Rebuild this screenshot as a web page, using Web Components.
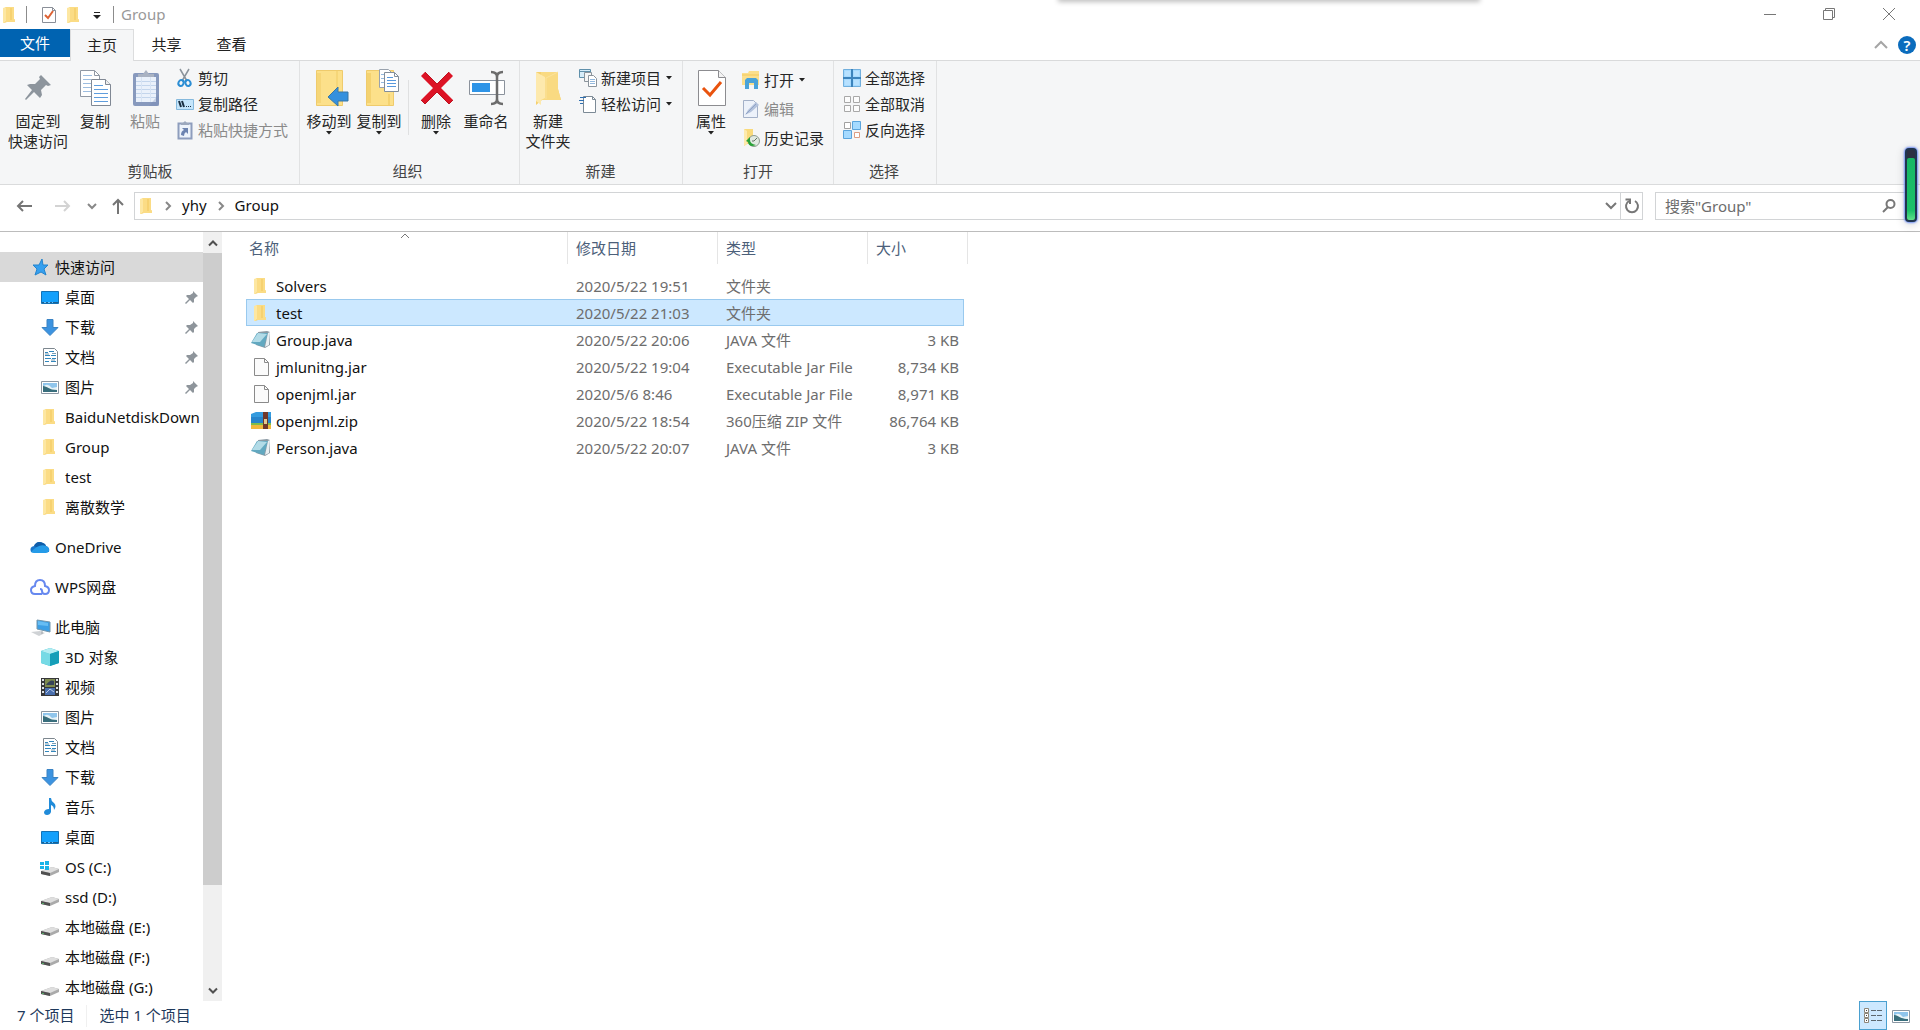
<!DOCTYPE html>
<html lang="zh-CN">
<head>
<meta charset="utf-8">
<title>Group</title>
<style>
  html, body { margin: 0; height: 100%; }
  body {
    overflow: hidden;
    background: #fff;
    color: #1a1a1a;
    font: 15px/20px "Noto Sans", "Noto Sans CJK SC", sans-serif;
  }
</style>
</head>
<body>
<explorer-window></explorer-window>

<script>
const ICONS = {
  folder: [14, 18, `<g transform="translate(-1 0)"><path d="M3 1h9v12l1 1v2H5l-3 1z" fill="#f6cf68"/><path d="M4 1h8v12l1 1v2H4z" fill="#fbdc85"/><path d="M1 2l3-1v14l-2 2H1z" fill="#fde7a2"/><path d="M9 2v12" stroke="#f1c75c"/></g>`],
  check: [16, 18, `<path d="M1.5 1.5h10l3 3v12h-13z" fill="#fff" stroke="#8a8f98"/><path d="M11.5 1.5v3h3" fill="none" stroke="#8a8f98"/><path d="M4 9l3 3 5-7" fill="none" stroke="#dd6234" stroke-width="2"/>`],
  qatMenu: [8, 8, `<path d="M1 .5h6" stroke="#222"/><path d="M0 3h8L4 7z" fill="#222"/>`],
  minimize: [14, 14, `<path d="M1 7.5h12" stroke="#777"/>`],
  restore: [14, 14, `<path d="M1.500 3.500h9v9h-9zM3.500 3V1.500h9v9H11" fill="none" stroke="#777"/>`],
  close: [14, 14, `<path d="M1 1l12 12M13 1L1 13" stroke="#777"/>`],
  chevronUp: [14, 10, `<path d="M1 8l6-6 6 6" fill="none" stroke="#a5a5a5" stroke-width="2"/>`],
  sort: [10, 6, `<path d="M1 5l4-4 4 4" fill="none" stroke="#777"/>`],
  caret: [6, 4, `<path d="M0 0h6L3 3.500z" fill="#222"/>`],
  back: [16, 12, `<path d="M16 6H2M7 1L2 6l5 5" fill="none" stroke="#757575" stroke-width="2"/>`],
  forward: [16, 12, `<path d="M0 6h14M9 1l5 5-5 5" fill="none" stroke="#d3d3d3" stroke-width="2"/>`],
  chevronDown: [10, 8, `<path d="M1 2l4 4 4-4" fill="none" stroke="#888" stroke-width="2"/>`],
  addressDown: [12, 8, `<path d="M1 1l5 5 5-5" fill="none" stroke="#777" stroke-width="2"/>`],
  chevronRight: [8, 10, `<path d="M2 1l4 4-4 4" fill="none" stroke="#888" stroke-width="2"/>`],
  up: [14, 16, `<path d="M7 16V2M2 7l5-5 5 5" fill="none" stroke="#757575" stroke-width="2"/>`],
  refresh: [16, 16, `<path d="M11 3a6 6 0 1 1-6 0" fill="none" stroke="#777" stroke-width="2"/><path d="M1.500 1.500H6V6" fill="none" stroke="#777" stroke-width="2"/>`],
  search: [14, 14, `<circle cx="8.500" cy="5" r="4" fill="none" stroke="#777" stroke-width="2"/><path d="M6 8l-5 5" stroke="#777" stroke-width="2"/>`],
  scrollUp: [10, 8, `<path d="M1 6.500l4-4 4 4" fill="none" stroke="#505050" stroke-width="2"/>`],
  scrollDown: [10, 8, `<path d="M1 1.500l4 4 4-4" fill="none" stroke="#505050" stroke-width="2"/>`],

  bigPin: [40, 36, `<path d="M23 5l10 10-3 1-2-1-5 5 1 5-2 3-6-6-8 8-1-1 7-9-5-5 3-1h5l5-5-1-2z" fill="#8d959d"/>`],
  bigCopy: [40, 36, `<path d="M5.500.5h14l5 5v21h-19z" fill="#fff" stroke="#9098a4"/><path d="M19.500.5v5h5" fill="none" stroke="#9098a4"/><path d="M8 5.500h9M8 9.500h8M8 13.500h8M8 17.500h8M8 21.500h8" stroke="#9dbde0"/><path d="M16.500 9.500h14l5 5v21h-19z" fill="#fff" stroke="#808894"/><path d="M30.500 9.500v5h5" fill="#eee" stroke="#808894"/><path d="M19 15.500h9M19 19.500h14M19 23.500h14M19 27.500h14M19 31.500h14" stroke="#5f9ddd"/>`],
  bigPaste: [40, 36, `<rect x="8" y="3" width="26" height="33" rx="2" fill="#8799bd"/><rect x="11" y="7" width="20" height="25" fill="#eaf1fb"/><path d="M11 11.500h20M11 15.500h20M11 19.500h20M11 23.500h20M11 27.500h20" stroke="#c3d5ec"/><path d="M16.500 7v25M25.500 7v25" stroke="#d8e4f4"/><path d="M13 7V4h5l3-4 3 4h5v3z" fill="#a9b2c2"/><path d="M24 36l10-12v12z" fill="#7589b4" opacity=".3"/>`],
  bigMove: [40, 36, `<path d="M7.500.5h26v35h-26z" fill="#fce08a" stroke="#efcb6c"/><path d="M8 3h4v30H8zM27 1h2v34h-2z" fill="#f6d678"/><path d="M19 27l10-10v5h10v9H29v5z" fill="#3490de" stroke="#3877a5"/>`],
  bigCopyTo: [40, 36, `<path d="M7.500.5h27v35h-27z" fill="#fce08a" stroke="#efcb6c"/><path d="M8 3h4v30H8zM29 24h2v11h-2z" fill="#f4d270"/><path d="M20.500-.5h9l4 4v14h-13z" fill="#fff" stroke="#99a2ad"/><path d="M22 4.500h3M22 8.500h3M22 12.500h3" stroke="#96badf"/><path d="M25.500 2.500h10l4 4v15h-14z" fill="#fff" stroke="#828e9b"/><path d="M35.500 2.500v4h4" fill="none" stroke="#828e9b"/><path d="M28 7.500h6M28 10.500h9M28 13.500h9M28 16.500h9" stroke="#5798dd"/>`],
  bigDelete: [40, 36, `<path d="M9 2l12 12L33 2l4 4-12 12 12 12-4 4-12-12L9 34l-4-4 12-12L5 6z" fill="#dc1325"/><path d="M9 2l12 12L33 2M5 30l4 4 12-12 12 12 4-4" fill="none" stroke="#bc1421"/>`],
  bigRename: [40, 36, `<path d="M3.500 10.500h35v14h-35z" fill="#fff" stroke="#8b929c"/><path d="M6 13h18v9H6z" fill="#2e94e7"/><path d="M25 2q6 0 6 5v22q0 5-6 5M37 2q-6 0-6 5M37 34q-6 0-6-5" fill="none" stroke="#6c6c6c" stroke-width="2.500"/>`],
  bigFolder: [40, 36, `<path d="M8 2h22v17l3 11H14l-6 5z" fill="#f5d06e"/><path d="M13 2h17v17l3 11H13z" fill="#f9da82"/><path d="M8 2l9 5v21l-4 2v5l-5-4z" fill="#fde9ad"/><path d="M18 29V8L30 2" fill="none" stroke="#fbe29a"/>`],
  bigProps: [40, 36, `<path d="M7.500.5h20l7 7v28h-27z" fill="#fff" stroke="#8c8c90"/><path d="M27.500.5v7h7" fill="#f3f3f3" stroke="#8c8c90"/><path d="M12 18l7 7 11-13" fill="none" stroke="#e9530e" stroke-width="3"/>`],

  cut: [18, 18, `<path d="M4 0l7 12M13 0L6 12" stroke="#8b949c" stroke-width="1.500"/><ellipse cx="5" cy="14" rx="2.500" ry="3" fill="none" stroke="#2c8ed4" stroke-width="2" transform="rotate(25 5 14)"/><ellipse cx="12" cy="14" rx="2.500" ry="3" fill="none" stroke="#2c8ed4" stroke-width="2" transform="rotate(-25 12 14)"/>`],
  path: [18, 18, `<path d="M.5 4.500h17v10H.5z" fill="#c4e5fb" stroke="#85b9dd"/><path d="M3 6l2 6M6 6l2 6" stroke="#1a2f42" stroke-width="2"/><path d="M10 11.500h1M12 11.500h1M14 11.500h1" stroke="#1a2f42"/>`],
  shortcut: [18, 18, `<path d="M2.500 2.500h13v15h-13z" fill="#edf3fb" stroke="#8e9dbd" stroke-width="2"/><path d="M5 4V2h2l2-2 2 2h2v2z" fill="#9ca8bd"/><path d="M5 14q0-4 3-5L6 7h6v6l-2-2q-2 1-2 4z" fill="#6c83b0"/>`],
  newItem: [18, 18, `<path d="M.5.5h11v8H.5z" fill="#d7edf9" stroke="#5f90ab"/><path d="M.5 2.500h11" stroke="#5f90ab"/><path d="M5.500 3.500h7v9h-7z" fill="#f5f5f5" stroke="#8b949c"/><path d="M9.500 6.500h5l3 3v8h-8z" fill="#fff" stroke="#8b949c"/><path d="M11 10.500h5M11 12.500h5M11 14.500h5" stroke="#93b8dd"/>`],
  easy: [18, 18, `<path d="M4.500 1.500h9l3 3v13h-12z" fill="#fff" stroke="#7c8a96"/><path d="M13.500 1.500v3h3" fill="none" stroke="#7c8a96"/><path d="M1 2.500h6M0 5.500h5M1 8.500h3" stroke="#2f6fb0"/>`],
  open: [18, 18, `<path d="M0 2h6l1-2h10v14H0z" fill="#fbdf8c"/><path d="M0 4h17" stroke="#f3c95c"/><path d="M3 18V9l2-2h9l2 2v9h-4v-6H7v6z" fill="#4aa3d8"/>`],
  edit: [18, 18, `<path d="M1.500.5h10l4 4v13h-14z" fill="#edf2fa" stroke="#a4b1c8"/><path d="M3 15l3-5 8-8 3 3-8 7z" fill="#b3c2dc"/><path d="M4 14l10-10" stroke="#91a4c6"/>`],
  history: [18, 18, `<path d="M2 0h9v14l-6 1-3 2z" fill="#f9da7c"/><path d="M2 0l3 2v13l-3 2z" fill="#fdeaad"/><circle cx="12" cy="12" r="5.500" fill="#e0e9e1" stroke="#8d9a8e"/><path d="M4 12l4-4v3q0 4 6 5-7 3-8-3z" fill="#28a137"/><path d="M12 12l3-3M12 12h-2" stroke="#637164"/>`],
  selectAll: [18, 18, `<path d="M.5.5h17v17H.5z" fill="#a5daff" stroke="#71afdd"/><path d="M9 0v18M0 9h18" stroke="#3c84bd" stroke-width="2"/><path d="M2 2h5v5H2zM11 2h5v5h-5zM2 11h5v5H2zM11 11h5v5h-5z" fill="#b7e1ff"/>`],
  selectNone: [18, 18, `<path d="M1.500 1.500h6v6h-6zM10.500 1.500h6v6h-6zM1.500 10.500h6v6h-6zM10.500 10.500h6v6h-6z" fill="#fcfcfc" stroke="#a8a8a8"/>`],
  invert: [18, 18, `<path d="M1.500 1.500h6v6h-6z" fill="#fff" stroke="#a0a0a0"/><path d="M11.500 11.500h5v5h-5z" fill="#fff" stroke="#dc9d83"/><path d="M9.500.5h8v8h-8zM.5 9.500h8v8h-8z" fill="#a5daff" stroke="#5aa4dc"/>`],

  star: [20, 20, `<path d="M12 2l1 6 5 0-4 4 2 6-5-3-6 3 2-6-4-4 6 0z" fill="#36a0ef" stroke="#2484cd"/>`],
  desktop: [20, 20, `<path d="M1.500 4.500h17v12h-17z" fill="#14a0fb" stroke="#1472b5"/><path d="M2 15.500h16" stroke="#1b5f91"/><path d="M4 15.500h2M8 15.500h2M12 15.500h1" stroke="#69c3fa"/>`],
  download: [20, 20, `<path d="M7 2.500h6v8h5l-8 8-8-8h5z" fill="#3c93e0" stroke="#3a83c4"/>`],
  doc: [20, 20, `<path d="M3.500 1.500h11l3 3v14h-14z" fill="#fff" stroke="#7d878f"/><path d="M5 5.500h3M9 4.500h5M5 8.500h5M11 8.500h5M5 11.500h6M12 11.500h4M5 14.500h4M11 14.500h5" stroke="#3287bd"/><path d="M5 7h4M11 13h4M12 6.500h4" stroke="#7d9caf"/>`],
  picture: [20, 20, `<path d="M1.500 4.500h17v12h-17z" fill="#fff" stroke="#8b97a3"/><path d="M3 6h14v9H3z" fill="#8fc5ec"/><path d="M3 10q4-5 9 1l5-1v5H3z" fill="#e7f3f8"/><path d="M3 9c4 0 6 4 14 4v2H3z" fill="#386e7c"/>`],
  onedrive: [20, 20, `<path d="M1 15q-2-5 3-6 3-6 9-3 2 0 3 3 4 1 3 6z" fill="#1976cb"/><path d="M4 9q3-6 9-3 2 1 3 3l-5 3z" fill="#105da8"/><path d="M1 15q8-9 15-6 4 2 3 5-1 2-3 2H4q-2 0-3-1z" fill="#259be8"/>`],
  wps: [20, 20, `<path d="M12 17H5q-4 0-4-4 0-3 4-4 0-6 5-6 5 0 5 6 4 1 4 4 0 4-4 4-3 0-3-3 0-2-2-2" fill="none" stroke="#6688ef" stroke-width="2"/>`],
  pc: [20, 20, `<path d="M7 3l13 2v10l-13-3z" fill="#3c9fe5" stroke="#7295ab"/><path d="M8 4l10 2v3L8 8z" fill="#66bdf4"/><path d="M1 15l9-1 5 2-6 3z" fill="#cfd2d5"/><path d="M12 14v3" stroke="#a1a7ac"/>`],
  cube: [20, 20, `<path d="M1 4l9-3 9 3v12l-9 3-9-3z" fill="#25b6ca"/><path d="M1 4l9 3v12l-9-3z" fill="#76dae5"/><path d="M1 4l9-3 9 3-9 3z" fill="#b4edf2"/><path d="M10 7l9-3v12l-9 3z" fill="#159eb8"/>`],
  video: [20, 20, `<path d="M1 1h18v18H1z" fill="#363739"/><path d="M5 2h10v8H5z" fill="#7d8a4e"/><path d="M5 11h10v7H5z" fill="#496fae"/><path d="M6 8q4-6 8-4v4z" fill="#35425a"/><path d="M6 16l4-4 4 3" stroke="#b7c9e8" fill="none"/><path d="M3 2v16M17 2v16" stroke="#dce1e5" stroke-width="2" stroke-dasharray="2 2"/>`],
  music: [20, 20, `<path d="M9 1h2q0 3 3 5 3 3 0 7 0-4-3-5v7q-1 3-4 3-3 0-3-3 1-3 5-3z" fill="#208bd9"/>`],
  drive: [20, 20, `<path d="M1 14l11-4 7 2v3l-9 4-9-2z" fill="#aaa"/><path d="M1 14l11-4 7 2-9 4z" fill="#dedede"/><path d="M1 14l9 2v3l-9-2z" fill="#505050"/><path d="M2 16.500h2" stroke="#55a965"/>`],
  osDrive: [20, 20, `<path d="M1 14l11-4 7 2v3l-9 4-9-2z" fill="#aaa"/><path d="M1 14l11-4 7 2-9 4z" fill="#dedede"/><path d="M1 14l9 2v3l-9-2z" fill="#505050"/><path d="M0 5h4v3H0zM5 4h4v4H5zM0 9h4v3H0zM5 9h4v4H5z" fill="#18b4e8"/>`],
  pin: [14, 14, `<path d="M8 1l5 5-2 1-2 2v3l-1 1-3-3-4 4-1-1 4-4-3-3 1-1h3l3-2z" fill="#8e959b"/>`],

  java: [20, 20, `<path d="M7 2l9-1 3 1v13l-5 3-9-3z" fill="#8b9aa4"/><path d="M6 3l11 0-4 14L0 13z" fill="#62a8c0"/><path d="M7 3l9 1-7 8-8 0z" fill="#b2dbe7"/><path d="M17 3l2-1-1 13-4 2z" fill="#e9eff2"/>`],
  file: [20, 20, `<path d="M3.500 1.500h10l4 4v13h-14z" fill="#fbfbfb" stroke="#8a8a8a"/><path d="M13.500 1.500v4h4" fill="none" stroke="#8a8a8a"/>`],
  zip: [20, 20, `<path d="M0 3l5-2h15v6H0z" fill="#349bde"/><path d="M0 6h20v6H0z" fill="#2784cb"/><path d="M0 12h20v3H0z" fill="#7fbd4a"/><path d="M0 14h20v4H0z" fill="#f0b83d"/><path d="M12 1h5v17h-5z" fill="#71382a"/><path d="M13 8h3v5h-3z" fill="#e4cb91"/>`],
  details: [20, 18, `<path d="M1.500 1.500h4v4h-4zM1.500 6.500h4v4h-4zM1.500 11.500h4v4h-4z" fill="#fff" stroke="#8e8679"/><path d="M3 3.500h1M3 8.500h1M3 13.500h1" stroke="#444"/><path d="M8 3.500h5M14 3.500h5M8 8.500h5M14 8.500h5M8 13.500h5M14 13.500h5" stroke="#5c676f"/>`]
};

const RESET = `
  *, *::before { box-sizing: border-box; }
  button, input { margin: 0; padding: 0; border: 0; background: none; font: inherit; color: inherit; outline: 0; }
`;

class ShadowElement extends HTMLElement {
  constructor() {
    super();
    this.attachShadow({ mode: "open" });
  }
  connectedCallback() {
    this.shadowRoot.innerHTML = `<style>${RESET}${this.css()}</style>${this.html()}`;
  }
  css() { return ""; }
  html() { return "<slot></slot>"; }
}

class AppIcon extends ShadowElement {
  css() { return `:host { display: inline-flex; flex: none; } svg { display: block; overflow: visible; }`; }
  html() {
    const [w, h, art] = ICONS[this.getAttribute("name")];
    return `<svg width="${w}" height="${h}" viewBox="0 0 ${w} ${h}" aria-hidden="true">${art}</svg>`;
  }
}

class TitleBar extends ShadowElement {
  css() {
    return `
    :host { display: flex; align-items: center; height: 29px; color: #999; }
    button { display: flex; align-items: center; justify-content: center; height: 28px; }
    .lead { width: 26px; padding-right: 7px; }
    .rule { width: 1px; height: 17px; background: #8c8c8c; }
    .check { width: 34px; padding-left: 10px; }
    .folder { width: 25px; }
    .menu { width: 27px; padding-right: 6px; padding-top: 3px; }
    h1 { margin: 0 0 0 7px; font: inherit; flex: 1; line-height: 24px; padding-bottom: 2px; }
    .win { width: 59px; padding-bottom: 1px; }
    .win:last-child { width: 62px; padding-right: 0; }`;
  }
  html() {
    return `
    <button class="lead" aria-label="系统菜单"><app-icon name="folder"></app-icon></button><span class="rule"></span>
    <button class="check" aria-label="属性"><app-icon name="check"></app-icon></button>
    <button class="folder" aria-label="新建文件夹"><app-icon name="folder"></app-icon></button>
    <button class="menu" aria-label="自定义"><app-icon name="qatMenu"></app-icon></button><span class="rule"></span>
    <h1><slot></slot></h1>
    <button class="win" aria-label="最小化"><app-icon name="minimize"></app-icon></button>
    <button class="win" aria-label="还原"><app-icon name="restore"></app-icon></button>
    <button class="win" aria-label="关闭"><app-icon name="close"></app-icon></button>`;
  }
}

class RibbonTabs extends ShadowElement {
  css() {
    return `
    :host { display: flex; height: 32px; border-bottom: 1px solid #d9dadb; }
    button { width: 65px; height: 31px; padding-bottom: 1px; color: #222; }
    .file { width: 70px; height: 28px; background: #0063b1; color: #fff; }
    .on { width: 64px; height: 32px; background: #f5f6f7; border: 1px solid #dcddde; border-bottom: 0; }
    .end { margin-left: auto; display: flex; align-items: center; gap: 10px; padding-right: 4px; }
    .end button { width: auto; height: auto; padding: 0; display: flex; }
    .end .help { width: 18px; height: 18px; border-radius: 50%; background: #0b6cbd; color: #fff; font-weight: 600; line-height: 18px; justify-content: center; }`;
  }
  html() {
    return `
    <button class="file">文件</button><button class="on">主页</button><button>共享</button><button>查看</button>
    <div class="end"><button aria-label="折叠功能区"><app-icon name="chevronUp"></app-icon></button><button class="help">?</button></div>`;
  }
}

class RibbonGroup extends ShadowElement {
  css() {
    return `
    :host { display: flex; flex-direction: column; justify-content: space-between; border-right: 1px solid #e1e2e3; padding: 4px var(--end, 7px) 3px var(--start, 5px); }
    .body { display: flex; align-items: flex-start; gap: 4px; }
    .label { text-align: center; color: #444; }`;
  }
  html() { return `<div class="body"><slot></slot></div><div class="label">${this.getAttribute("label")}</div>`; }
}

class RibbonButton extends ShadowElement {
  css() {
    return `
    :host { display: block; margin-top: 5px; }
    button { display: flex; flex-direction: column; align-items: center; min-width: 46px; color: #262626; }
    button:disabled { color: #8a8a8a; }
    app-icon { margin-bottom: 5px; }
    .caret { margin: 0; }`;
  }
  html() {
    return `<button ${this.hasAttribute("disabled") ? "disabled" : ""}><app-icon name="${this.getAttribute("icon")}"></app-icon><slot></slot>${
      this.hasAttribute("menu") ? '<app-icon class="caret" name="caret"></app-icon>' : ""}</button>`;
  }
}

class RibbonItem extends ShadowElement {
  css() {
    return `
    :host { display: block; }
    button { display: flex; align-items: center; gap: 4px; height: var(--row, 26px); padding: 0 4px; color: #262626; white-space: nowrap; }
    button:disabled { color: #8a8a8a; }
    .caret { margin-left: 1px; }`;
  }
  html() {
    return `<button ${this.hasAttribute("disabled") ? "disabled" : ""}><app-icon name="${this.getAttribute("icon")}"></app-icon><slot></slot>${
      this.hasAttribute("menu") ? '<app-icon class="caret" name="caret"></app-icon>' : ""}</button>`;
  }
}

class ExplorerRibbon extends ShadowElement {
  css() {
    return `
    :host { display: flex; height: 124px; background: #f5f6f7; border-bottom: 1px solid #dadbdc; }
    .clip { --start: 8px; --end: 7px; }
    .organize { --start: 6px; --end: 10px; }
    .new { --start: 5px; --end: 6px; }
    .open { --row: 29px; --end: 5px; }
    .select { --end: 7px; }
    .split { width: 1px; height: 55px; margin: 15px 0 0 2px; background: #dfe0e1; }`;
  }
  html() {
    return `
    <ribbon-group class="clip" label="剪贴板">
      <ribbon-button icon="bigPin">固定到<br>快速访问</ribbon-button>
      <ribbon-button icon="bigCopy">复制</ribbon-button>
      <ribbon-button icon="bigPaste" disabled>粘贴</ribbon-button>
      <div><ribbon-item icon="cut">剪切</ribbon-item><ribbon-item icon="path">复制路径</ribbon-item><ribbon-item icon="shortcut" disabled>粘贴快捷方式</ribbon-item></div>
    </ribbon-group>
    <ribbon-group class="organize" label="组织">
      <ribbon-button icon="bigMove" menu>移动到</ribbon-button>
      <ribbon-button icon="bigCopyTo" menu>复制到</ribbon-button>
      <span class="split"></span>
      <ribbon-button icon="bigDelete" menu>删除</ribbon-button>
      <ribbon-button icon="bigRename">重命名</ribbon-button>
    </ribbon-group>
    <ribbon-group class="new" label="新建">
      <ribbon-button icon="bigFolder">新建<br>文件夹</ribbon-button>
      <div><ribbon-item icon="newItem" menu>新建项目</ribbon-item><ribbon-item icon="easy" menu>轻松访问</ribbon-item></div>
    </ribbon-group>
    <ribbon-group class="open" label="打开">
      <ribbon-button icon="bigProps" menu>属性</ribbon-button>
      <div><ribbon-item icon="open" menu>打开</ribbon-item><ribbon-item icon="edit" disabled>编辑</ribbon-item><ribbon-item icon="history">历史记录</ribbon-item></div>
    </ribbon-group>
    <ribbon-group class="select" label="选择">
      <div><ribbon-item icon="selectAll">全部选择</ribbon-item><ribbon-item icon="selectNone">全部取消</ribbon-item><ribbon-item icon="invert">反向选择</ribbon-item></div>
    </ribbon-group>`;
  }
}

class AddressBar extends ShadowElement {
  css() {
    return `
    :host { display: flex; align-items: center; height: 47px; padding: 0 10px 4px 4px; border-bottom: 1px solid #bcbcbc; }
    button { display: flex; align-items: center; justify-content: center; height: 26px; flex: none; }
    .wide { width: 39px; }
    .recent { width: 20px; }
    .up { width: 32px; }
    .box { display: flex; align-items: center; height: 28px; border: 1px solid #d2d4d6; }
    .path { flex: 1; padding-left: 5px; color: #111; }
    .path a { color: inherit; text-decoration: none; padding-bottom: 2px; }
    .crumb { width: 28px; display: flex; justify-content: center; }
    .drop { width: 16px; margin-left: auto; margin-right: 1px; }
    .refresh { width: 22px; border-left: 1px solid #d2d4d6; }
    .search { width: 255px; margin-left: 12px; padding: 0 13px 0 9px; }
    input { flex: 1; min-width: 0; height: 26px; color: #6d6d6d; }
    input::placeholder { color: #6d6d6d; opacity: 1; }`;
  }
  html() {
    return `
    <button class="wide" aria-label="后退"><app-icon name="back"></app-icon></button>
    <button class="wide" aria-label="前进"><app-icon name="forward"></app-icon></button>
    <button class="recent" aria-label="最近"><app-icon name="chevronDown"></app-icon></button>
    <button class="up" aria-label="上移"><app-icon name="up"></app-icon></button>
    <div class="box path">
      <app-icon name="folder"></app-icon>
      <span class="crumb"><app-icon name="chevronRight"></app-icon></span><a href="#yhy">yhy</a>
      <span class="crumb"><app-icon name="chevronRight"></app-icon></span><a href="#group">Group</a>
      <button class="drop" aria-label="历史"><app-icon name="addressDown"></app-icon></button>
      <button class="refresh" aria-label="刷新"><app-icon name="refresh"></app-icon></button>
    </div>
    <label class="box search"><input type="text" aria-label="搜索" placeholder='搜索"Group"'><app-icon name="search"></app-icon></label>`;
  }
}

class NavItem extends ShadowElement {
  css() {
    return `
    :host { display: block; }
    :host([root]) { margin-top: 10px; }
    :host([selected]) { margin-top: 0; background: #d9d9d9; }
    a { display: flex; align-items: center; height: 30px; padding: 0 4px 0 40px; color: #111; text-decoration: none; white-space: nowrap; }
    :host([root]) a { padding-left: 30px; }
    .icon { display: flex; justify-content: center; width: 20px; margin-right: 5px; flex: none; }
    .pin { margin-left: auto; }`;
  }
  html() {
    return `<a href="#"><span class="icon"><app-icon name="${this.getAttribute("icon")}"></app-icon></span><slot></slot>${
      this.hasAttribute("pinned") ? '<app-icon class="pin" name="pin"></app-icon>' : ""}</a>`;
  }
}

class NavPane extends ShadowElement {
  css() {
    return `
    :host { display: flex; width: 222px; flex: none; min-height: 0; }
    nav { flex: 1; min-width: 0; overflow: hidden; padding-top: 20px; }
    .bar { width: 19px; display: flex; flex-direction: column; background: #f0f0f0; }
    .bar button { display: flex; align-items: center; justify-content: center; height: 21px; flex: none; }
    .track { flex: 1; }
    .thumb { height: 87%; background: #cdcdcd; }`;
  }
  html() {
    return `
    <nav>
      <nav-item root selected icon="star">快速访问</nav-item>
      <nav-item icon="desktop" pinned>桌面</nav-item>
      <nav-item icon="download" pinned>下载</nav-item>
      <nav-item icon="doc" pinned>文档</nav-item>
      <nav-item icon="picture" pinned>图片</nav-item>
      <nav-item icon="folder">BaiduNetdiskDown</nav-item>
      <nav-item icon="folder">Group</nav-item>
      <nav-item icon="folder">test</nav-item>
      <nav-item icon="folder">离散数学</nav-item>
      <nav-item root icon="onedrive">OneDrive</nav-item>
      <nav-item root icon="wps">WPS网盘</nav-item>
      <nav-item root icon="pc">此电脑</nav-item>
      <nav-item icon="cube">3D 对象</nav-item>
      <nav-item icon="video">视频</nav-item>
      <nav-item icon="picture">图片</nav-item>
      <nav-item icon="doc">文档</nav-item>
      <nav-item icon="download">下载</nav-item>
      <nav-item icon="music">音乐</nav-item>
      <nav-item icon="desktop">桌面</nav-item>
      <nav-item icon="osDrive">OS (C:)</nav-item>
      <nav-item icon="drive">ssd (D:)</nav-item>
      <nav-item icon="drive">本地磁盘 (E:)</nav-item>
      <nav-item icon="drive">本地磁盘 (F:)</nav-item>
      <nav-item icon="drive">本地磁盘 (G:)</nav-item>
    </nav>
    <div class="bar">
      <button aria-label="向上滚动"><app-icon name="scrollUp"></app-icon></button>
      <div class="track"><div class="thumb"></div></div>
      <button aria-label="向下滚动"><app-icon name="scrollDown"></app-icon></button>
    </div>`;
  }
}

const FILES = [
  ["folder", "Solvers", "2020/5/22 19:51", "文件夹", ""],
  ["folder", "test", "2020/5/22 21:03", "文件夹", "", true],
  ["java", "Group.java", "2020/5/22 20:06", "JAVA 文件", "3 KB"],
  ["file", "jmlunitng.jar", "2020/5/22 19:04", "Executable Jar File", "8,734 KB"],
  ["file", "openjml.jar", "2020/5/6 8:46", "Executable Jar File", "8,971 KB"],
  ["zip", "openjml.zip", "2020/5/22 18:54", "360压缩 ZIP 文件", "86,764 KB"],
  ["java", "Person.java", "2020/5/22 20:07", "JAVA 文件", "3 KB"]
];

class FileList extends ShadowElement {
  css() {
    return `
    :host { display: block; flex: 1; padding-left: 24px; }
    table { table-layout: fixed; width: 722px; border-collapse: separate; border-spacing: 0; }
    .c-name { width: 322px; } .c-mid { width: 150px; } .c-size { width: 96px; } .c-edge { width: 4px; }
    th { padding: 0 0 8px; font-weight: normal; text-align: left; color: #4c607a; position: relative; }
    th span { display: block; height: 32px; line-height: 32px; padding-left: 8px; border-right: 1px solid #e5e5e5; }
    th:first-child span { padding-left: 3px; }
    th app-icon { position: absolute; top: 1px; left: 50%; margin-left: -7px; }
    td { height: 27px; padding: 0 0 0 8px; color: #6d6d6d; white-space: nowrap; line-height: 20px; border: 1px solid transparent; border-width: 1px 0; }
    td:first-child { padding-left: 4px; color: #111; border-left-width: 1px; }
    td:nth-child(4) { padding: 0 4px 0 0; text-align: right; border-right-width: 1px; }
    .name { display: flex; align-items: center; }
    .icon { display: flex; width: 20px; margin-right: 5px; justify-content: center; }
    .on td { background: #cce8ff; border-color: #99c9ee; }`;
  }
  html() {
    const rows = FILES.map(([icon, name, date, type, size, on]) => `
      <tr class="${on ? "on" : ""}"><td><div class="name"><span class="icon"><app-icon name="${icon}"></app-icon></span>${name}</div></td><td>${date}</td><td>${type}</td><td>${size}</td></tr>`).join("");
    return `<table>
      <colgroup><col class="c-name"><col class="c-mid"><col class="c-mid"><col class="c-size"><col class="c-edge"></colgroup>
      <thead><tr><th><span>名称</span><app-icon name="sort"></app-icon></th><th><span>修改日期</span></th><th><span>类型</span></th><th colspan="2"><span>大小</span></th></tr></thead>
      <tbody>${rows}</tbody></table>`;
  }
}

class StatusBar extends ShadowElement {
  css() {
    return `
    :host { display: flex; align-items: center; height: 29px; padding: 0 5px 0 17px; color: #1e395b; }
    span { padding-bottom: 2px; }
    .count { padding-right: 12px; margin-right: 12px; border-right: 1px solid #f0f0f0; }
    .views { margin-left: auto; display: flex; align-self: stretch; }
    button { width: 28px; display: flex; align-items: center; justify-content: center; }
    .on { background: #cce8ff; border: 1px solid #4aa0d0; }`;
  }
  html() {
    return `<span class="count">7 个项目</span><span>选中 1 个项目</span>
    <div class="views"><button class="on" aria-label="详细信息"><app-icon name="details"></app-icon></button><button aria-label="大缩略图"><app-icon name="picture"></app-icon></button></div>`;
  }
}

/* Floating gauge docked at the right edge of the desktop. */
class EdgeGauge extends ShadowElement {
  css() {
    return `
    :host { display: block; box-sizing: border-box; position: absolute; top: 148px; right: 3px; width: 12px; height: 74px; border-radius: 4px; border: 2px solid #20354f; background: #2c2f42; padding-top: 8px; box-shadow: 0 0 2px 1px #6f8ff5, 0 2px 8px 2px rgba(0,0,0,.12); }
    div { height: 100%; border-radius: 2px; background: linear-gradient(#17b765, #1cc069 85%, #5fe08a); }`;
  }
  html() { return "<div></div>"; }
}

/* Shadow cast by a panel that is tucked above the top edge. */
class TopShade extends ShadowElement {
  css() { return `:host { display: block; position: absolute; top: -10px; left: 1060px; width: 418px; height: 10px; box-shadow: 0 0 5px 2px rgba(0,0,0,.25); }`; }
  html() { return ""; }
}

class ExplorerWindow extends ShadowElement {
  css() {
    return `
    :host { display: flex; flex-direction: column; height: 100vh; position: relative; overflow: hidden; }
    main { display: flex; flex: 1; min-height: 0; }`;
  }
  html() {
    return `
    <title-bar>Group</title-bar>
    <ribbon-tabs></ribbon-tabs>
    <explorer-ribbon></explorer-ribbon>
    <address-bar></address-bar>
    <main><nav-pane></nav-pane><file-list></file-list></main>
    <status-bar></status-bar>
    <edge-gauge></edge-gauge>
    <top-shade></top-shade>`;
  }
}

Object.entries({
  "app-icon": AppIcon, "title-bar": TitleBar, "ribbon-tabs": RibbonTabs, "ribbon-group": RibbonGroup,
  "ribbon-button": RibbonButton, "ribbon-item": RibbonItem, "explorer-ribbon": ExplorerRibbon,
  "address-bar": AddressBar, "nav-item": NavItem, "nav-pane": NavPane, "file-list": FileList,
  "status-bar": StatusBar, "edge-gauge": EdgeGauge, "top-shade": TopShade, "explorer-window": ExplorerWindow
}).forEach(([tag, cls]) => customElements.define(tag, cls));
</script>
</body>
</html>
